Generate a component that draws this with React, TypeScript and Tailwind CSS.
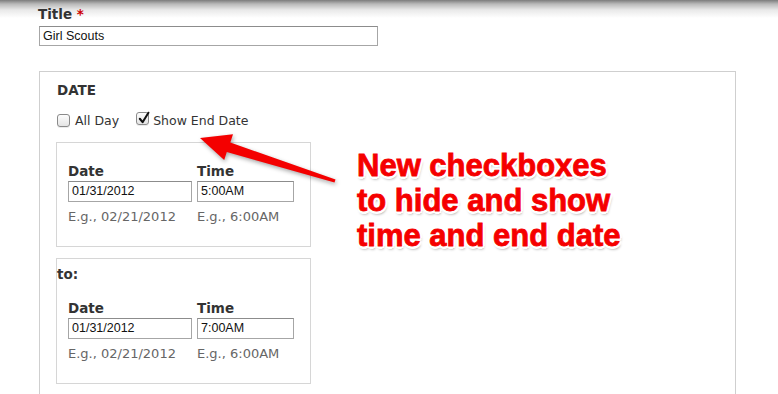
import React from "react";

const uiFont = "font-['DejaVu_Sans',sans-serif]";
const inputFont = "font-['Liberation_Sans',Arial,sans-serif]";

function Checkbox({ checked }: { checked?: boolean }) {
  return (
    <span className="relative inline-block h-[13px] w-[13px] shrink-0 rounded-[3px] border border-[#8a8a8a] bg-[linear-gradient(to_bottom,#fdfdfd,#e4e4e4)] shadow-[0_1px_0_rgba(0,0,0,0.08)]">
      {checked && (
        <svg
          viewBox="0 0 13 13"
          className="absolute left-[0px] top-[-2px] h-[14px] w-[14px]"
        >
          <path
            d="M2.6 7.2 L5.2 10.4 L10.6 1.6"
            fill="none"
            stroke="#111"
            strokeWidth="1.9"
            strokeLinecap="round"
            strokeLinejoin="round"
          />
        </svg>
      )}
    </span>
  );
}

function TextInput({ value, width }: { value: string; width: string }) {
  return (
    <div
      className={`${width} h-[21px] border border-[#a6a6a6] border-t-[#8c8c8c] bg-white pl-[3px] ${inputFont} text-[12.5px] leading-[19px] text-[#111]`}
    >
      {value}
    </div>
  );
}

function DateTimeRow({ time }: { time: string }) {
  return (
    <div className="flex gap-[5px] pl-[11px]">
      <div className="flex flex-col">
        <span className="text-[13.5px] font-bold leading-[16px] text-[#333]">Date</span>
        <div className="mt-[2px]">
          <TextInput value="01/31/2012" width="w-[124px]" />
        </div>
        <span className="mt-[7px] text-[13px] leading-[16px] text-[#666]">
          E.g., 02/21/2012
        </span>
      </div>
      <div className="flex flex-col">
        <span className="text-[13.5px] font-bold leading-[16px] text-[#333]">Time</span>
        <div className="mt-[2px]">
          <TextInput value={time} width="w-[97px]" />
        </div>
        <span className="mt-[7px] text-[13px] leading-[16px] text-[#666]">
          E.g., 6:00AM
        </span>
      </div>
    </div>
  );
}

export default function App() {
  return (
    <div
      className={`relative h-[394px] w-full overflow-hidden bg-[linear-gradient(to_bottom,#7c7c7c_0px,#b9b9b9_4px,#e9e9e9_10px,#ffffff_18px)] pl-[38px] pt-[6px] ${uiFont}`}
    >
      {/* Title */}
      <div className="text-[13.5px] font-bold leading-[16px] text-[#333]">
        Title <span className="text-[#cc0000]">*</span>
      </div>
      <div className="ml-px mt-[4px]">
        <div
          className={`h-[20px] w-[339px] border border-[#a6a6a6] border-t-[#8c8c8c] bg-white pl-[3px] ${inputFont} text-[12.5px] leading-[18px] text-[#111]`}
        >
          Girl Scouts
        </div>
      </div>

      {/* Date fieldset */}
      <div className="ml-px mt-[25px] h-[400px] w-[697px] border border-[#cfcfcf] pl-[16px] pt-[10px]">
        <div className="ml-px text-[13.5px] font-bold leading-[16px] text-[#333]">DATE</div>

        <div className="ml-px mt-[14px] flex items-center text-[12.5px] leading-[16px] text-[#333]">
          <Checkbox />
          <span className="ml-[5px]">All Day</span>
          <span className="ml-[17px]">
            <Checkbox checked />
          </span>
          <span className="ml-[4px]">Show End Date</span>
        </div>

        <div className="mt-[13px] h-[105px] w-[255px] border border-[#d6d6d6] pt-[20px]">
          <DateTimeRow time="5:00AM" />
        </div>

        <div className="mt-[11px] h-[126px] w-[255px] border border-[#d6d6d6] pt-[7px]">
          <div className="text-[13.5px] font-bold leading-[16px] text-[#333]">to:</div>
          <div className="mt-[18px]">
            <DateTimeRow time="7:00AM" />
          </div>
        </div>
      </div>

      {/* Annotation arrow */}
      <svg
        className="pointer-events-none absolute left-0 top-0 h-[394px] w-[778px] drop-shadow-[1px_2px_2px_rgba(0,0,0,0.35)]"
        viewBox="0 0 778 394"
      >
        <polygon
          points="200,138 233,134.3 230.3,142.6 335.5,179.4 334.5,182.6 226.8,152 224.2,160"
          fill="#f40000"
        />
      </svg>

      {/* Annotation text */}
      <div className="pointer-events-none absolute left-[357px] top-[148px] font-['Liberation_Sans',Arial,sans-serif] text-[31px] font-bold leading-[35px] text-[#f50000] [-webkit-text-stroke:0.8px_#f50000] [text-shadow:2.5px_0_0_#fff,-2.5px_0_0_#fff,0_2.5px_0_#fff,0_-2.5px_0_#fff,1.8px_1.8px_0_#fff,-1.8px_1.8px_0_#fff,1.8px_-1.8px_0_#fff,-1.8px_-1.8px_0_#fff,1px_3px_3px_rgba(0,0,0,0.45)]">
        <div>New checkboxes</div>
        <div>to hide and show</div>
        <div>time and end date</div>
      </div>
    </div>
  );
}
